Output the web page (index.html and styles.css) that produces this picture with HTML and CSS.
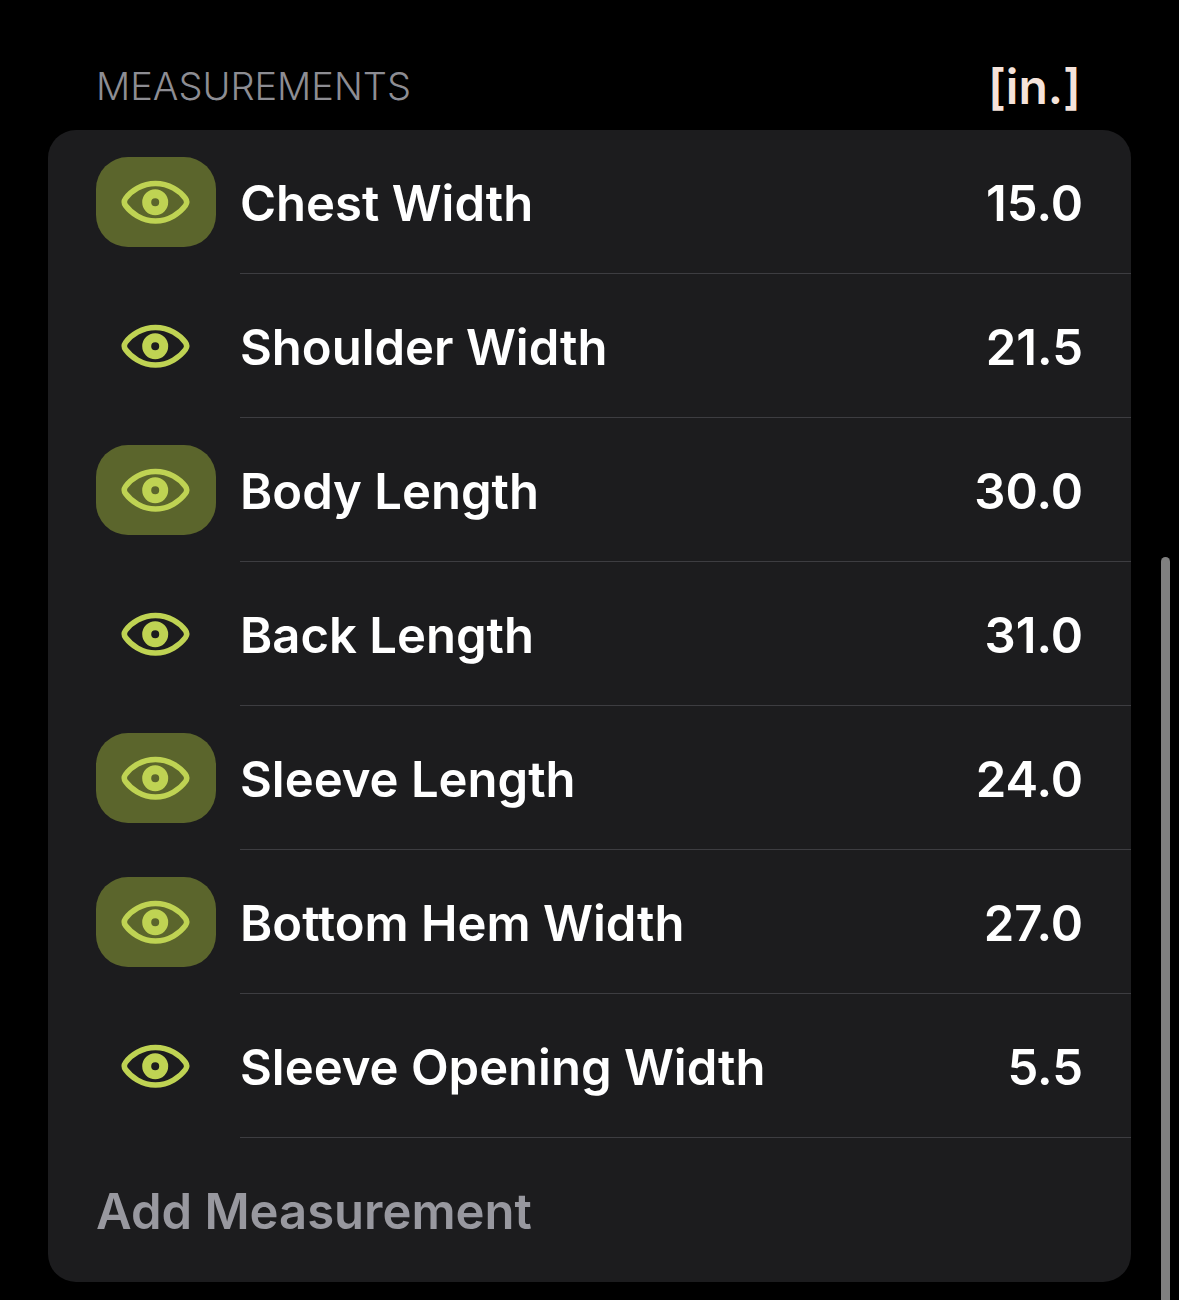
FILE: index.html
```html
<!DOCTYPE html>
<html lang="en">
<head>
  <meta charset="UTF-8">
  <meta name="viewport" content="width=device-width, initial-scale=1.0">
  <title>Measurements</title>
  <link rel="stylesheet" href="styles.css">
</head>
<body>
  <!-- Eye icon shared by all rows -->
  <svg class="sprite" aria-hidden="true">
    <symbol id="eye" viewBox="1 0 70 44" overflow="visible">
      <path d="M35.500 3.500 C49 3.500 60 11 65.500 18.500 Q68 22 65.500 25.500 C60 33 49 41 35.500 41 C22 41 11 33 5.500 25.500 Q3 22 5.500 18.500 C11 11 22 3.500 35.500 3.500 Z" fill="none" stroke="currentColor" stroke-width="5.500" stroke-linejoin="round"/>
      <circle cx="35.200" cy="22.200" r="8.500" fill="none" stroke="currentColor" stroke-width="9"/>
    </symbol>
  </svg>

  <main class="container">
    <header class="section-header">
      <h1>Measurements</h1>
      <button type="button" class="unit">[in.]</button>
    </header>

    <form class="card">
      <div class="row">
        <button type="button" class="toggle active" aria-label="Show Chest Width"><svg><use href="#eye"/></svg></button>
        <div class="field">
          <label for="chest">Chest Width</label>
          <input type="text" id="chest" inputmode="decimal" value="15.0">
        </div>
      </div>
      <div class="row">
        <button type="button" class="toggle" aria-label="Show Shoulder Width"><svg><use href="#eye"/></svg></button>
        <div class="field">
          <label for="shoulder">Shoulder Width</label>
          <input type="text" id="shoulder" inputmode="decimal" value="21.5">
        </div>
      </div>
      <div class="row">
        <button type="button" class="toggle active" aria-label="Show Body Length"><svg><use href="#eye"/></svg></button>
        <div class="field">
          <label for="body">Body Length</label>
          <input type="text" id="body" inputmode="decimal" value="30.0">
        </div>
      </div>
      <div class="row">
        <button type="button" class="toggle" aria-label="Show Back Length"><svg><use href="#eye"/></svg></button>
        <div class="field">
          <label for="back">Back Length</label>
          <input type="text" id="back" inputmode="decimal" value="31.0">
        </div>
      </div>
      <div class="row">
        <button type="button" class="toggle active" aria-label="Show Sleeve Length"><svg><use href="#eye"/></svg></button>
        <div class="field">
          <label for="sleeve">Sleeve Length</label>
          <input type="text" id="sleeve" inputmode="decimal" value="24.0">
        </div>
      </div>
      <div class="row">
        <button type="button" class="toggle active" aria-label="Show Bottom Hem Width"><svg><use href="#eye"/></svg></button>
        <div class="field">
          <label for="hem">Bottom Hem Width</label>
          <input type="text" id="hem" inputmode="decimal" value="27.0">
        </div>
      </div>
      <div class="row">
        <button type="button" class="toggle" aria-label="Show Sleeve Opening Width"><svg><use href="#eye"/></svg></button>
        <div class="field">
          <label for="opening">Sleeve Opening Width</label>
          <input type="text" id="opening" inputmode="decimal" value="5.5">
        </div>
      </div>
      <button type="button" class="add">Add Measurement</button>
    </form>
  </main>

  <div class="scroll-thumb"></div>

  <script>
    document.querySelectorAll('.toggle').forEach((toggle) => {
      toggle.addEventListener('click', () => {
        toggle.classList.toggle('active');
      });
    });
  </script>
</body>
</html>
```
FILE: styles.css
```css
* {
  box-sizing: border-box;
}

html {
  scrollbar-width: none;
}

body {
  margin: 0;
  background-color: #000;
  color: #fff;
  font-family: Inter, sans-serif;
  font-size: 49px;
  font-weight: 600;
}

button, input {
  font: inherit;
  color: inherit;
  background: none;
  border: none;
  padding: 0;
}

button {
  cursor: pointer;
}

.sprite {
  position: absolute;
  width: 0;
  height: 0;
}

.container {
  padding: 44px 48px 18px;
}

.section-header {
  display: flex;
  justify-content: space-between;
  align-items: center;
  height: 84px;
  margin-bottom: 2px;
  padding: 0 50px 0 48px;
}

.section-header h1 {
  margin: 0;
  font-size: 38px;
  font-weight: 300;
  text-transform: uppercase;
  color: #8d8d93;
}

.unit {
  font-size: 48px;
  color: #f5e3da;
}

.card {
  background-color: #1c1c1e;
  border-radius: 28px;
  overflow: hidden;
}

.row {
  display: flex;
  align-items: center;
  gap: 24px;
  height: 144px;
  padding-left: 48px;
}

.toggle {
  display: flex;
  flex-shrink: 0;
  justify-content: center;
  align-items: center;
  width: 120px;
  height: 90px;
  border-radius: 32px;
  color: #bfd353;
}

.toggle.active {
  background-color: #5b652c;
}

.toggle svg {
  width: 70px;
  height: 44px;
  overflow: visible;
}

.field {
  display: flex;
  flex: 1;
  justify-content: space-between;
  align-items: center;
  height: 100%;
  min-width: 0;
  padding: 3px 48px 0 0;
  border-bottom: 1px solid #3d3d41;
}

.field input {
  width: 200px;
  text-align: right;
  outline: none;
}

.add {
  display: block;
  width: 100%;
  height: 144px;
  padding: 2px 48px 0;
  text-align: left;
  color: #98989f;
}

/* Scroll indicator over the right edge */
.scroll-thumb {
  position: fixed;
  top: 557px;
  right: 9px;
  bottom: -8px;
  width: 9px;
  border-radius: 5px;
  background-color: #808080;
}
```
